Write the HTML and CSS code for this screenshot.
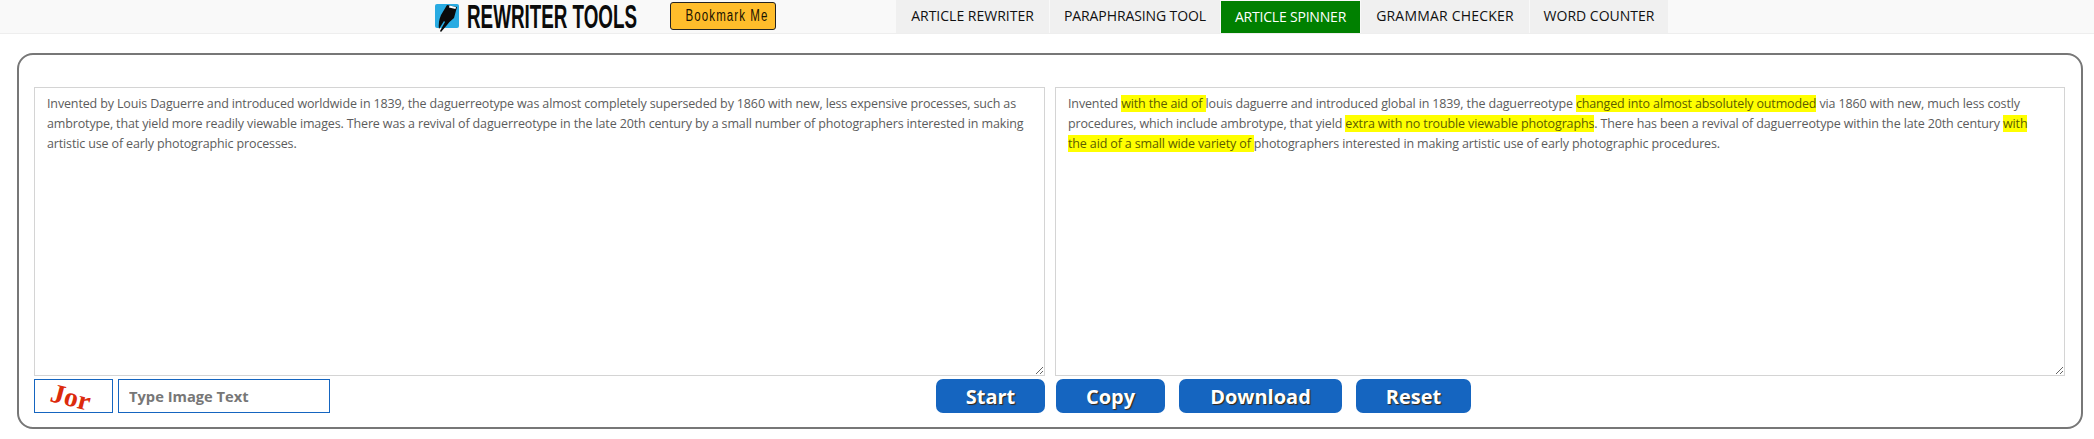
FILE: index.html
```html
<!DOCTYPE html>
<html lang="en">
<head>
<meta charset="utf-8">
<title>Article Spinner - Rewriter Tools</title>
<link rel="stylesheet" href="styles.css">
</head>
<body>
<header class="topbar">
  <a class="brand" href="#">
    <svg class="brand-icon" viewBox="0 0 26 30" aria-hidden="true">
      <rect x="1" y="2" width="24" height="24" rx="2" fill="#29abe2"/>
      <path d="M13 3 L23 5 L20 16 Q15 20 13 23 L7 30 L6 29 L11 20 L10 19 L5 27 Q4 20 7 13 Z" fill="#0a0a0a"/>
      <path d="M15.5 3.5 L22 5 L21.5 7 L15 5.5 Z" fill="#fff"/>
    </svg>
    <span class="brand-name">REWRITER TOOLS</span>
  </a>
  <button class="bookmark" type="button"><span class="bookmark-label">Bookmark Me</span></button>
  <nav class="tabs">
    <a class="tab tab-rewriter" href="#">ARTICLE REWRITER</a>
    <a class="tab tab-para" href="#">PARAPHRASING TOOL</a>
    <a class="tab tab-active" href="#">ARTICLE SPINNER</a>
    <a class="tab tab-grammar" href="#">GRAMMAR CHECKER</a>
    <a class="tab tab-word" href="#">WORD COUNTER</a>
  </nav>
</header>
<main class="panel">
  <div class="editor-grid">
    <textarea class="box" spellcheck="false">Invented by Louis Daguerre and introduced worldwide in 1839, the daguerreotype was almost completely superseded by 1860 with new, less expensive processes, such as ambrotype, that yield more readily viewable images. There was a revival of daguerreotype in the late 20th century by a small number of photographers interested in making artistic use of early photographic processes.</textarea>
    <div class="box box-output">Invented <mark>with the aid of </mark>louis daguerre and introduced global in 1839, the daguerreotype <mark>changed into almost absolutely outmoded</mark> via 1860 with new, much less costly procedures, which include ambrotype, that yield <mark>extra with no trouble viewable photographs</mark>. There has been a revival of daguerreotype within the late 20th century <mark>with the aid of a small wide variety of </mark>photographers interested in making artistic use of early photographic procedures.</div>
    <div class="controls controls-left">
      <div class="captcha">
        <svg viewBox="0 0 77 32" aria-label="captcha image">
          <text class="captcha-text" x="0" y="0" transform="translate(14 21) skewY(14) skewX(-14) scale(1.35 1.4)">Jor</text>
        </svg>
      </div>
      <input class="captcha-input" type="text" placeholder="Type Image Text">
      <button class="btn btn-start" type="button">Start</button>
    </div>
    <div class="controls controls-right">
      <button class="btn btn-copy" type="button">Copy</button>
      <button class="btn btn-download" type="button">Download</button>
      <button class="btn btn-reset" type="button">Reset</button>
    </div>
  </div>
</main>
</body>
</html>
```

FILE: styles.css
```css
* { box-sizing: border-box; }

html, body {
  margin: 0;
  background: #fff;
}

body {
  font-family: "Open Sans", "Noto Sans", sans-serif;
  color: #555;
  overflow: hidden;
}

.topbar {
  display: flex;
  align-items: flex-start;
  height: 34px;
  padding-left: 434px;
  background: #f9f9f9;
  border-bottom: 1px solid #eee;
}

.brand {
  display: flex;
  align-items: center;
  width: 236px;
  height: 33px;
  color: #0b0b0b;
  text-decoration: none;
}

.brand-icon {
  width: 26px;
  height: 30px;
  flex: none;
  margin-right: 7px;
}

.brand-name {
  display: block;
  width: 168px;
  font-family: "Liberation Sans", sans-serif;
  font-weight: 700;
  font-size: 33px;
  line-height: 33px;
  white-space: nowrap;
  transform: scaleX(0.57);
  transform-origin: left center;
}

.bookmark {
  width: 106px;
  height: 28px;
  margin-top: 2px;
  padding: 0;
  background: #ffbd2b;
  border: 1px solid #222;
  border-radius: 3px;
  color: #1a1200;
}

.bookmark-label {
  display: block;
  font-family: "Liberation Sans", sans-serif;
  font-size: 16px;
  letter-spacing: 1.5px;
  white-space: nowrap;
  transform: scaleX(0.72);
}

.tabs {
  display: flex;
  margin-left: 120px;
}

.tab {
  display: block;
  height: 33px;
  background: #f0f0f0;
  color: #111;
  text-align: center;
  font-size: 14px;
  line-height: 32px;
  text-decoration: none;
  white-space: nowrap;
  margin-right: 1px;
}

.tab-rewriter { width: 153px; }
.tab-para { width: 170px; letter-spacing: -0.1px; }
.tab-active { width: 139px; height: 32px; margin-top: 1px; background: #008000; color: #fff; letter-spacing: -0.2px; }
.tab-grammar { width: 168px; letter-spacing: 0.2px; }
.tab-word { width: 138px; margin-right: 0; }

.panel {
  height: 376px;
  margin: 19px 11px 0 17px;
  padding: 32px 16px 0 15px;
  border: 2px solid #777;
  border-radius: 16px;
}

.editor-grid {
  display: grid;
  grid-template-columns: 1011px 1010px;
  grid-template-rows: 289px 34px;
  column-gap: 10px;
  row-gap: 3px;
}

.box {
  display: block;
  width: 100%;
  height: 289px;
  margin: 0;
  padding: 6px 20px 6px 12px;
  background: #fff;
  border: 1px solid #d4d4d4;
  border-radius: 0;
  font-family: "Open Sans", "Noto Sans", sans-serif;
  font-size: 12.5px;
  letter-spacing: -0.14px;
  line-height: 20px;
  color: #5c5c5c;
  outline: none;
  resize: both;
  overflow: auto;
}

mark {
  background: #ffff00;
  color: #5c5c00;
}

.controls {
  display: flex;
  align-items: stretch;
  gap: 14px;
}

.controls-left {
  gap: 5px;
}

.controls-right {
  padding-left: 1px;
}

.captcha {
  width: 79px;
  height: 34px;
  border: 1px solid #1565c0;
}

.captcha svg {
  display: block;
  width: 77px;
  height: 32px;
  overflow: visible;
}

.captcha-text {
  font-family: "Liberation Serif", serif;
  font-weight: 700;
  font-size: 20px;
  fill: #dc2a0c;
}

.captcha-input {
  width: 212px;
  height: 34px;
  padding: 0 10px;
  border: 1px solid #1565c0;
  border-radius: 0;
  background: #fff;
  font-family: "Open Sans", "Noto Sans", sans-serif;
  font-size: 14.7px;
  font-weight: 700;
  outline: none;
}

.captcha-input::placeholder {
  color: #777;
  opacity: 1;
}

.btn {
  height: 34px;
  padding: 0;
  background: #1565c0;
  border: 0;
  border-radius: 7px;
  color: #fff;
  font-family: "Open Sans", "Noto Sans", sans-serif;
  font-size: 20px;
  font-weight: 700;
  text-shadow: 1px 1px 1px #3a2410;
}

.btn-start { width: 109px; margin-left: auto; }
.btn-copy { width: 109px; }
.btn-download { width: 163px; }
.btn-reset { width: 115px; }
```
